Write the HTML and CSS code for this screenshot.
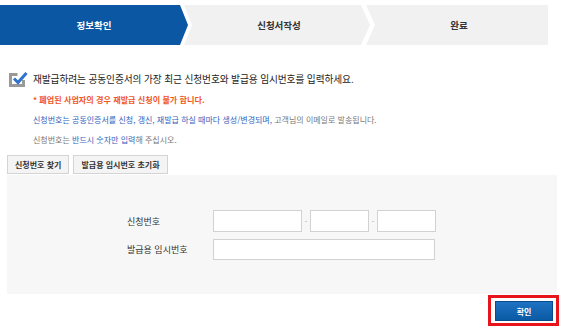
FILE: index.html
```html
<!DOCTYPE html>
<html lang="ko">
<head>
<meta charset="utf-8">
<link rel="stylesheet" href="styles.css">
</head>
<body>
<div class="steps">
  <div class="step step-first step-active">정보확인</div>
  <div class="step step-mid">신청서작성</div>
  <div class="step step-last">완료</div>
</div>

<div class="notice">
  <div class="notice-head">
    <svg class="check-icon" width="22" height="18" viewBox="0 0 22 18">
      <path d="M9.5 4.5 H2.5 V15.5 H15.5 V10" fill="none" stroke="#999" stroke-width="3"/>
      <path d="M6 8.5 L10 12.5 L18.5 3" fill="none" stroke="#2f72cf" stroke-width="3"/>
    </svg>
    <span class="notice-title">재발급하려는 공동인증서의 가장 최근 신청번호와 발급용 임시번호를 입력하세요.</span>
  </div>
  <p class="line line-red">* 폐업된 사업자의 경우 재발급 신청이 불가 합니다.</p>
  <p class="line"><span class="blue">신청번호는 공동인증서를 신청, 갱신, 재발급 하실 때마다 생성/변경되며,</span> 고객님의 이메일로 발송됩니다.</p>
  <p class="line">신청번호는 <span class="blue">반드시 숫자만 입력</span>해 주십시오.</p>
</div>

<div class="btn-row">
  <button class="small-btn">신청번호 찾기</button>
  <button class="small-btn">발급용 임시번호 초기화</button>
</div>

<div class="panel">
  <div class="form-row">
    <label class="form-label">신청번호</label>
    <div class="inputs">
      <input class="inp inp-a" type="text">
      <span class="dash">-</span>
      <input class="inp inp-b" type="text">
      <span class="dash">-</span>
      <input class="inp inp-b" type="text">
    </div>
  </div>
  <div class="form-row">
    <label class="form-label">발급용 임시번호</label>
    <div class="inputs">
      <input class="inp inp-full" type="text">
    </div>
  </div>
</div>

<div class="confirm-row">
  <div class="confirm-mark">
    <button class="confirm-btn">확인</button>
  </div>
</div>
</body>
</html>
```

FILE: styles.css
```css
* { box-sizing: border-box; }
html, body { margin: 0; padding: 0; background: #fff; }
body {
  font-family: "Noto Sans CJK KR", "Noto Sans", sans-serif;
  color: #333;
  width: 561px;
  height: 326px;
  overflow: hidden;
}

.steps {
  display: flex;
  width: 548px;
  height: 40px;
  margin-top: 5px;
}
.step {
  display: flex;
  align-items: center;
  justify-content: center;
  background: #f1f1f1;
  color: #333;
  font-size: 9.5px;
  font-weight: 700;
}
.step-active { background: #0b57a3; color: #fff; }
.step-first {
  width: 188px;
  clip-path: polygon(0 0, calc(100% - 8px) 0, 100% 50%, calc(100% - 8px) 100%, 0 100%);
}
.step-mid {
  width: 186px;
  margin-left: -4px;
  padding-left: 4px;
  clip-path: polygon(0 0, calc(100% - 9px) 0, 100% 50%, calc(100% - 9px) 100%, 0 100%, 8px 50%);
}
.step-last {
  flex: 1;
  margin-left: -4px;
  padding-left: 4px;
  clip-path: polygon(0 0, 100% 0, 100% 100%, 0 100%, 9px 50%);
}

.notice {
  padding-left: 8px;
  margin-top: 25px;
}
.notice-head {
  display: flex;
  align-items: center;
  height: 18px;
}
.check-icon { display: block; margin-right: 3px; }
.notice-title {
  font-size: 9.7px;
  color: #222;
  letter-spacing: -0.1px;
}
.line {
  margin: 0;
  padding-left: 25px;
  font-size: 8px;
  color: #777;
  line-height: 20px;
}
.line-red {
  color: #f0571f;
  font-weight: 700;
  font-size: 8.1px;
  margin-top: 2px;
}
.blue { color: #2f63c0; }

.btn-row {
  display: flex;
  gap: 4px;
  padding-left: 7px;
  margin-top: 5px;
}
.small-btn {
  font-family: inherit;
  font-size: 8px;
  font-weight: 700;
  color: #333;
  background: #f4f4f4;
  border: 1px solid #d4d4d4;
  height: 19px;
  padding: 0 7px;
  margin: 0;
}

.panel {
  margin: 1px 4px 0 7px;
  background: #f7f7f7;
  height: 119px;
  padding: 35px 0 0 120px;
  display: flex;
  flex-direction: column;
  gap: 7px;
}
.form-row {
  display: flex;
  align-items: center;
}
.form-label {
  width: 86px;
  font-size: 9px;
  color: #333;
}
.inputs {
  display: flex;
  align-items: center;
}
.inp {
  height: 22px;
  background: #fff;
  border: 1px solid #d2d2d2;
  margin: 0;
  padding: 0;
}
.inp-a { width: 89px; }
.inp-b { width: 59px; }
.inp-full { width: 222px; height: 21px; }
.dash {
  width: 8px;
  text-align: center;
  font-size: 7px;
  color: #999;
}

.confirm-row {
  display: flex;
  justify-content: flex-end;
  padding-right: 2px;
  margin-top: 1px;
}
.confirm-mark {
  border: 3px solid #e8141b;
  padding: 3px 3px 2px 4px;
  width: 71px;
  height: 31px;
}
.confirm-btn {
  display: block;
  width: 100%;
  height: 100%;
  font-family: inherit;
  font-size: 8px;
  font-weight: 700;
  color: #fff;
  background: linear-gradient(#1f72c2, #0a5aa5);
  border: 1px solid #0a4d8e;
  margin: 0;
  padding: 0;
}
```
